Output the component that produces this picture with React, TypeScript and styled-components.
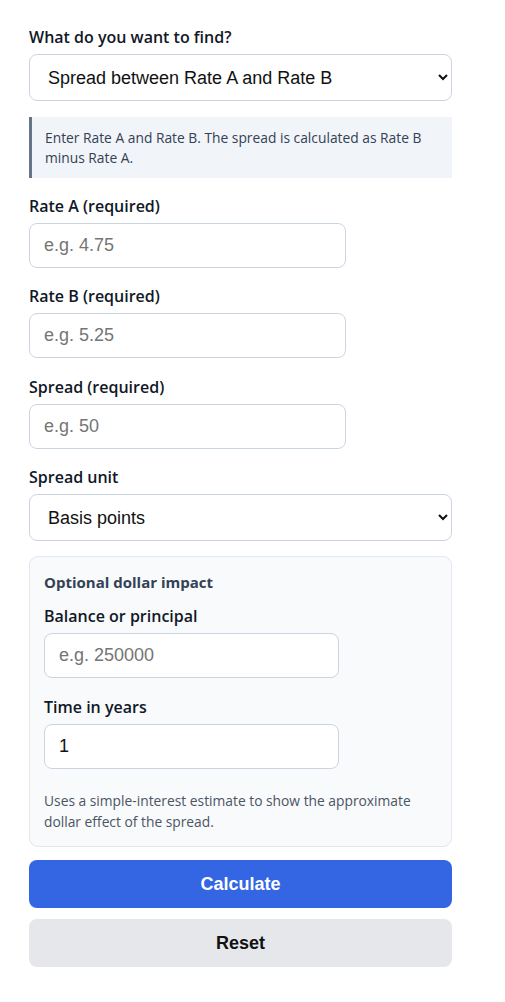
import React from "react";
import styled, { createGlobalStyle } from "styled-components";

const GlobalStyle = createGlobalStyle`
  html, body {
    margin: 0;
    padding: 0;
    background: #ffffff;
  }
  body {
    font-family: "Open Sans", "Noto Sans", sans-serif;
    color: #111827;
  }
  * { box-sizing: border-box; }
`;

const Form = styled.form`
  width: 423px;
  margin: 27px 0 0 29px;
  display: flex;
  flex-direction: column;
`;

const Field = styled.div<{ $gap?: number }>`
  display: flex;
  flex-direction: column;
  margin-bottom: ${(p) => (p.$gap ?? 18)}px;
`;

const Label = styled.label`
  display: block;
  font-size: 16px;
  line-height: 20px;
  font-weight: 600;
  color: #111827;
  margin: 0 0 7px 0;
`;

const Select = styled.select`
  width: 100%;
  height: 47px;
  padding: 0 10px 0 14px;
  border: 1px solid #cbd5e1;
  border-radius: 8px;
  background: #ffffff;
  font-family: "Liberation Sans", Arial, sans-serif;
  font-size: 18px;
  color: #111111;
`;

const Input = styled.input`
  width: 75%;
  height: 45px;
  padding: 0 14px;
  border: 1px solid #cbd5e1;
  border-radius: 8px;
  background: #ffffff;
  font-family: "Liberation Sans", Arial, sans-serif;
  font-size: 18px;
  color: #111111;
  &::placeholder { color: #757575; }
`;

const Hint = styled.p`
  margin: 0 0 18px 0;
  padding: 11px 12px 10px 13px;
  border-left: 3px solid #64748b;
  background: #f1f4f8;
  font-size: 13.8px;
  line-height: 20px;
  color: #334155;
`;

const Panel = styled.fieldset`
  margin: 0 0 13px 0;
  padding: 15px 14px 14px 14px;
  border: 1px solid #e2e8f0;
  border-radius: 9px;
  background: #f8fafc;
  min-width: 0;
  display: flex;
  flex-direction: column;
`;

const PanelTitle = styled.legend`
  float: left;
  width: 100%;
  padding: 0;
  margin: 0 0 14px 0;
  font-size: 15px;
  line-height: 20px;
  font-weight: 700;
  color: #334155;
`;

const Note = styled.p`
  margin: 0;
  font-size: 13.8px;
  line-height: 21px;
  color: #4b5563;
`;

const Button = styled.button<{ $primary?: boolean }>`
  width: 100%;
  height: 48px;
  border: none;
  border-radius: 8px;
  font-family: "Liberation Sans", Arial, sans-serif;
  font-size: 18px;
  font-weight: 700;
  cursor: pointer;
  background: ${(p) => (p.$primary ? "#3465e3" : "#e5e7eb")};
  color: ${(p) => (p.$primary ? "#ffffff" : "#111111")};
  margin-bottom: ${(p) => (p.$primary ? 11 : 0)}px;
`;

export default function App() {
  return (
    <>
      <GlobalStyle />
      <Form onSubmit={(e) => e.preventDefault()}>
        <Field $gap={16}>
          <Label htmlFor="find">What do you want to find?</Label>
          <Select id="find" defaultValue="spread">
            <option value="spread">Spread between Rate A and Rate B</option>
            <option value="rateA">Rate A</option>
            <option value="rateB">Rate B</option>
          </Select>
        </Field>

        <Hint>
          Enter Rate A and Rate B. The spread is calculated as Rate B minus Rate A.
        </Hint>

        <Field>
          <Label htmlFor="rateA">Rate A (required)</Label>
          <Input id="rateA" placeholder="e.g. 4.75" />
        </Field>
        <Field $gap={19}>
          <Label htmlFor="rateB">Rate B (required)</Label>
          <Input id="rateB" placeholder="e.g. 5.25" />
        </Field>
        <Field>
          <Label htmlFor="spread">Spread (required)</Label>
          <Input id="spread" placeholder="e.g. 50" />
        </Field>
        <Field $gap={15}>
          <Label htmlFor="unit">Spread unit</Label>
          <Select id="unit" defaultValue="bp">
            <option value="bp">Basis points</option>
            <option value="pct">Percentage points</option>
          </Select>
        </Field>

        <Panel>
          <PanelTitle>Optional dollar impact</PanelTitle>
          <Field $gap={19}>
            <Label htmlFor="balance">Balance or principal</Label>
            <Input id="balance" placeholder="e.g. 250000" />
          </Field>
          <Field $gap={21}>
            <Label htmlFor="years">Time in years</Label>
            <Input id="years" defaultValue="1" />
          </Field>
          <Note>
            Uses a simple-interest estimate to show the approximate dollar effect of the spread.
          </Note>
        </Panel>

        <Button type="submit" $primary>Calculate</Button>
        <Button type="button">Reset</Button>
      </Form>
    </>
  );
}
